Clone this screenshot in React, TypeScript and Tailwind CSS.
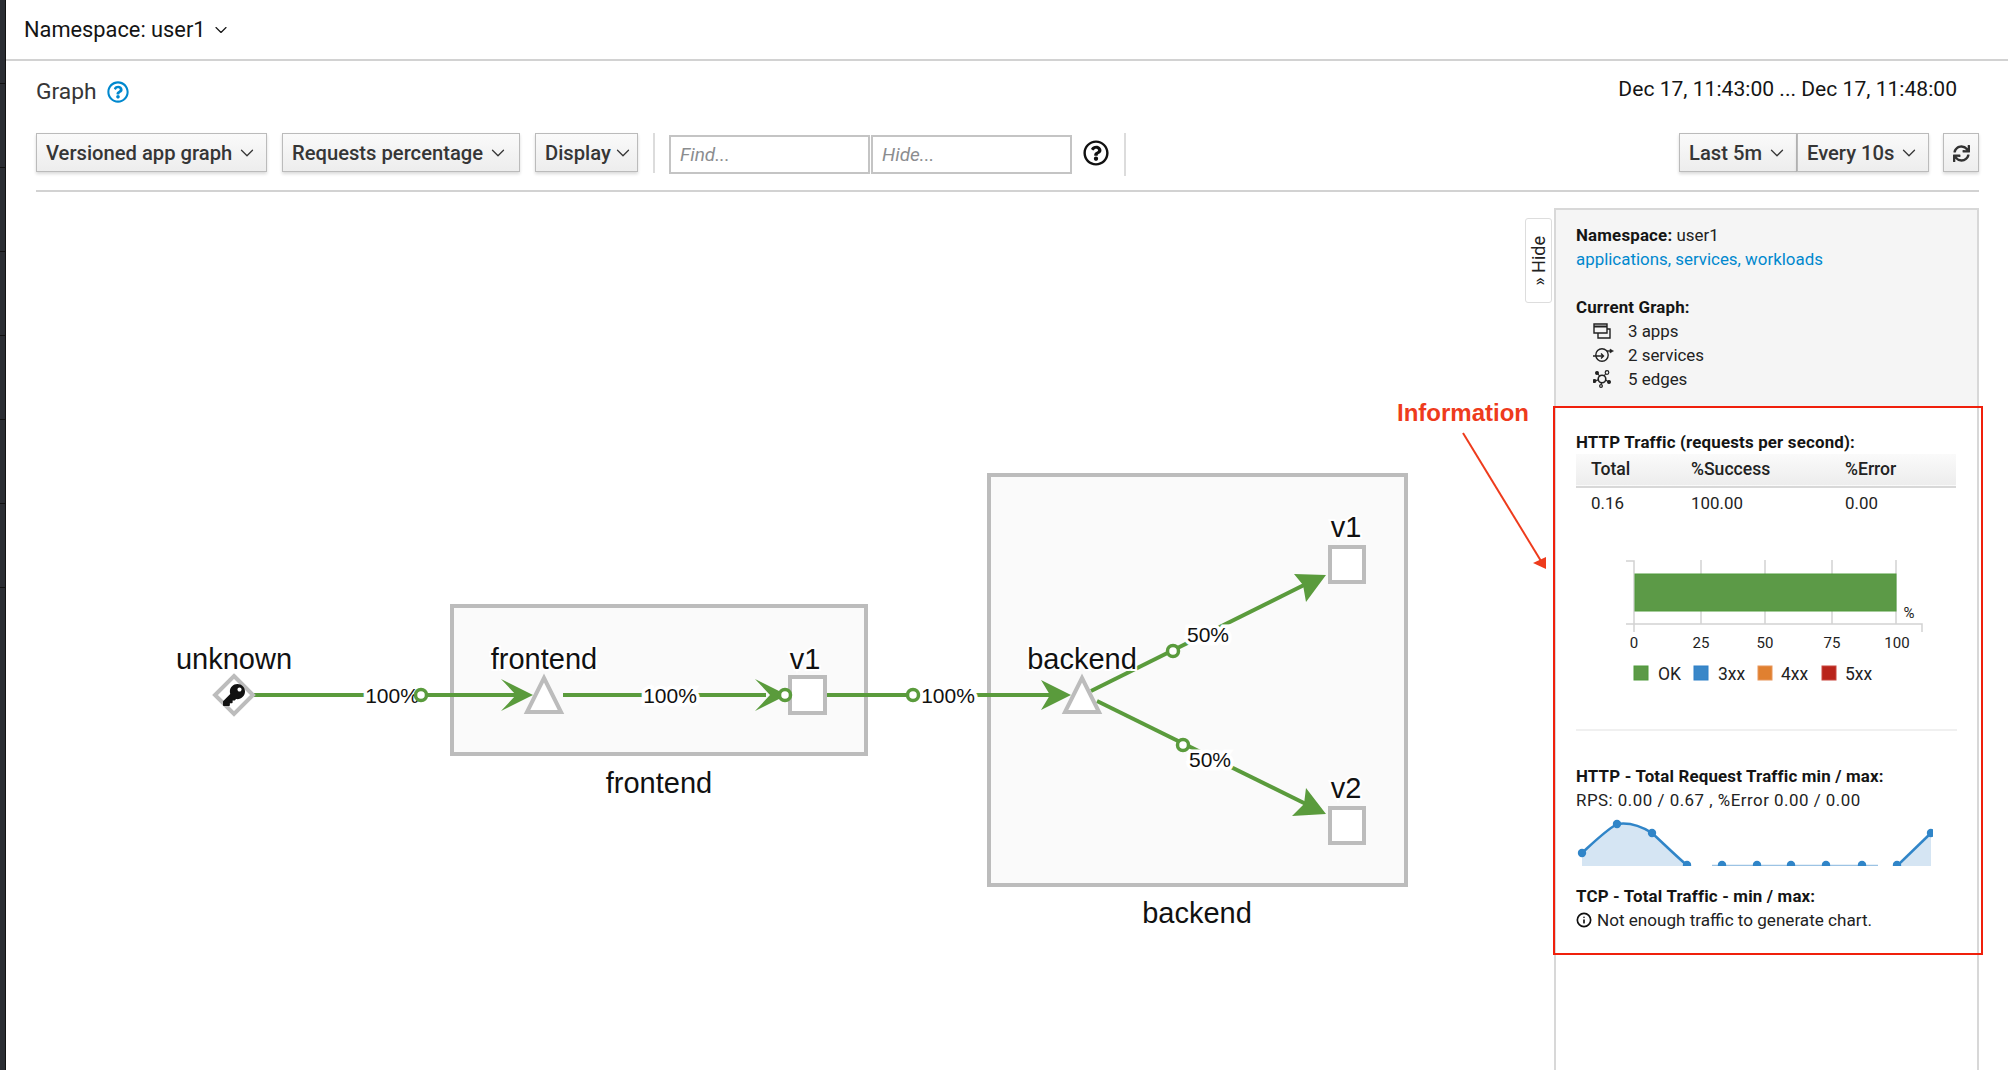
import { ChevronDown, Info } from "lucide-react";
import { FaKey, FaRegQuestionCircle, FaSync } from "react-icons/fa";

const GREEN = "#5a9b3c";
const GREY = "#bcbcbc";

const BUTTON =
  "flex h-[39px] shrink-0 items-center border border-[#bbb] bg-gradient-to-b from-[#fafafa] to-[#ededed] px-[9px] pt-[1px] text-[20.2px] font-medium text-[#363636] shadow-[0_2px_3px_rgba(0,0,0,0.15)]";

function DropButton({
  label,
  width,
  chevron = "ml-[4px]",
}: {
  label: string;
  width: string;
  chevron?: string;
}) {
  return (
    <button type="button" className={`${BUTTON} ${width}`}>
      <span className="whitespace-nowrap">{label}</span>
      <ChevronDown className={`h-[22px] w-[22px] shrink-0 text-[#363636] ${chevron}`} strokeWidth={1.4} />
    </button>
  );
}

function Label({
  x,
  y,
  size = 29,
  halo = 4,
  children,
}: {
  x: number;
  y: number;
  size?: number;
  halo?: number;
  children: string;
}) {
  return (
    <text
      x={x}
      y={y}
      textAnchor="middle"
      fontSize={size}
      fontFamily="'Liberation Sans', sans-serif"
      fill="#111"
      stroke="#fff"
      strokeWidth={halo}
      className="[paint-order:stroke]"
    >
      {children}
    </text>
  );
}

function Ring({ x, y }: { x: number; y: number }) {
  return <circle cx={x} cy={y} r={5.5} fill="#fff" stroke={GREEN} strokeWidth={3.5} />;
}

function GraphCanvas() {
  return (
    <svg viewBox="36 192 1518 878" className="h-[878px] w-[1518px] shrink-0">
      {/* compound boxes */}
      <rect x={452} y={606} width={414} height={148} fill="#fafafa" stroke={GREY} strokeWidth={4} />
      <rect x={989} y={475} width={417} height={410} fill="#fafafa" stroke={GREY} strokeWidth={4} />

      {/* edges */}
      <g stroke={GREEN} strokeWidth={4} fill="none">
        <path d="M253 695H516" />
        <path d="M563 695H766" />
        <path d="M825 695H1050" />
        <path d="M1091 691L1310 582" />
        <path d="M1097 701L1310 806" />
      </g>
      <g fill={GREEN}>
        <path d="M501 679L533 695L501 711L516 695Z" />
        <path d="M755 679L787 695L755 711L770 695Z" />
        <path d="M1041 680L1071 695L1041 710L1050 695Z" />
        <path d="M1326 575L1294 574L1303 585L1306 602Z" />
        <path d="M1326 814L1306 788L1304 804L1292 816Z" />
      </g>

      <Label x={392} y={703} size={21} halo={7}>100%</Label>
      <Label x={670} y={703} size={21} halo={7}>100%</Label>
      <Label x={948} y={703} size={21} halo={7}>100%</Label>
      <Label x={1208} y={642} size={21} halo={7}>50%</Label>
      <Label x={1210} y={767} size={21} halo={7}>50%</Label>

      {/* nodes */}
      <path d="M234 676L253 695L234 714L215 695Z" fill="#fff" stroke={GREY} strokeWidth={4} />
      <FaKey x={223} y={684} size={22} color="#111" />
      <path d="M544 678L561 712H527Z" fill="#fff" stroke={GREY} strokeWidth={4} />
      <rect x={790} y={677} width={35} height={36} fill="#fff" stroke={GREY} strokeWidth={4} />
      <path d="M1082 678L1099 712H1065Z" fill="#fff" stroke={GREY} strokeWidth={4} />
      <rect x={1330} y={547} width={34} height={35} fill="#fff" stroke={GREY} strokeWidth={4} />
      <rect x={1330} y={808} width={34} height={35} fill="#fff" stroke={GREY} strokeWidth={4} />

      <Ring x={421} y={695} />
      <Ring x={785} y={695} />
      <Ring x={913} y={695} />
      <Ring x={1173} y={651} />
      <Ring x={1183} y={745} />

      <Label x={234} y={669}>unknown</Label>
      <Label x={544} y={669}>frontend</Label>
      <Label x={805} y={669}>v1</Label>
      <Label x={659} y={793}>frontend</Label>
      <Label x={1082} y={669}>backend</Label>
      <Label x={1346} y={537}>v1</Label>
      <Label x={1346} y={798}>v2</Label>
      <Label x={1197} y={923}>backend</Label>

      {/* annotation */}
      <text
        x={1397}
        y={421}
        fontSize={24}
        fontWeight={700}
        fontFamily="'Liberation Sans', sans-serif"
        fill="#ee3b1c"
      >
        Information
      </text>
      <path d="M1463 433L1541 561" stroke="#ee3b1c" strokeWidth={2} fill="none" />
      <path d="M1533 563L1546 557L1546 569Z" fill="#ee3b1c" />
    </svg>
  );
}

function AppsIcon() {
  return (
    <svg viewBox="0 0 18 16" className="h-[16px] w-[18px]" fill="none" stroke="#222" strokeWidth={1.4}>
      <path d="M1 1H14V10H1Z" />
      <path d="M1 3.5H14" strokeWidth={2} />
      <path d="M14 6H17V15H5V10" />
    </svg>
  );
}

function ServicesIcon() {
  return (
    <svg viewBox="0 0 21 16" className="h-[16px] w-[21px]" fill="none" stroke="#222" strokeWidth={1.4}>
      <circle cx={9} cy={8} r={6.2} />
      <path d="M0 9H10M8 6.5L10.5 9L8 11.5" />
      <path d="M14 4H17" />
      <path d="M17 2L20.5 4L17 6Z" fill="#222" strokeWidth={0.5} />
    </svg>
  );
}

function EdgesIcon() {
  return (
    <svg viewBox="0 0 18 18" className="h-[18px] w-[18px]" fill="#222" stroke="#222" strokeWidth={1.2}>
      <circle cx={9} cy={9} r={3.8} fill="none" strokeWidth={1.6} />
      <circle cx={4} cy={3} r={1.4} />
      <circle cx={14} cy={2.5} r={1.8} fill="none" />
      <circle cx={1.5} cy={11} r={1.4} />
      <circle cx={16} cy={12} r={1.4} />
      <circle cx={8} cy={16} r={1.4} fill="none" />
      <path d="M5 4L7 6.5M12.5 4L11 6M3 10.5L5.5 9.8M15 11.5L12.5 10M8.5 13L8.2 14.5" fill="none" />
    </svg>
  );
}

function BarChart() {
  const text = "fill-[#222] text-[15px] [font-family:Roboto,sans-serif]";
  return (
    <svg viewBox="1576 550 380 140" className="h-[140px] w-[380px]">
      <g stroke="#d2d2d2" strokeWidth={1.5} fill="none">
        <path d="M1626 561H1634V632" />
        <path d="M1701 560V624M1765 560V624M1832 560V624M1896 560V624" />
        <path d="M1626 624H1922V632" />
      </g>
      <rect x={1635} y={574} width={261} height={37} fill="#5c9a47" stroke="#4f9a3a" strokeWidth={1} />
      <text x={1909} y={618} textAnchor="middle" className={text}>%</text>
      {[
        [1634, "0"],
        [1701, "25"],
        [1765, "50"],
        [1832, "75"],
        [1897, "100"],
      ].map(([x, t]) => (
        <text key={t} x={x} y={648} textAnchor="middle" className={text}>
          {t}
        </text>
      ))}
      {[
        [1634, "#5c9a47", "#4f9a3a", "OK", 1658],
        [1694, "#3a87c8", "#2f80c8", "3xx", 1718],
        [1758, "#e08030", "#e8965a", "4xx", 1781],
        [1822, "#b9241b", "#c9463f", "5xx", 1845],
      ].map(([x, fill, line, t, tx]) => (
        <g key={t as string}>
          <rect x={x as number} y={666} width={14} height={14} fill={fill as string} stroke={line as string} />
          <text x={tx as number} y={680} className={`${text} text-[17.5px]`}>
            {t}
          </text>
        </g>
      ))}
    </svg>
  );
}

function Sparkline() {
  const dots = [
    [1582, 853],
    [1617, 824],
    [1652, 833],
    [1687, 865],
    [1722, 865],
    [1757, 865],
    [1791, 865],
    [1826, 865],
    [1862, 865],
    [1897, 865],
    [1931, 833],
  ];
  return (
    <svg viewBox="1576 816 380 54" className="mt-[4px] h-[54px] w-[380px]">
      <defs>
        <clipPath id="spark">
          <rect x={1576} y={816} width={357} height={50} />
        </clipPath>
      </defs>
      <g clipPath="url(#spark)">
        <path
          d="M1582 853C1594 842 1605 831 1617 824C1630 822 1641 826 1652 833C1665 845 1676 856 1687 866H1582ZM1897 866L1931 833V866Z"
          fill="#d5e5f3"
        />
        <path
          d="M1582 853C1594 842 1605 831 1617 824C1630 822 1641 826 1652 833C1665 845 1676 856 1689 867"
          fill="none"
          stroke="#3085c8"
          strokeWidth={2.5}
        />
        <path d="M1712 865.5H1878" stroke="#9cc3e4" strokeWidth={1.5} />
        <path d="M1897 866L1931 833" stroke="#3085c8" strokeWidth={2.5} />
        {dots.map(([x, y]) => (
          <circle key={x} cx={x} cy={y} r={4.2} fill="#3085c8" />
        ))}
      </g>
    </svg>
  );
}

function SidePanel() {
  return (
    <aside className="relative mt-[16px] h-[862px] w-[425px] shrink-0 border-x-2 border-t-2 border-[#d8d8d8] text-[16.9px] leading-[24px] text-[#222]">
      <button
        type="button"
        className="absolute -left-[31px] top-[8px] flex h-[85px] w-[27px] items-center justify-center rounded-[3px] border border-[#ddd] bg-white text-[18px] text-[#222]"
      >
        <span className="rotate-180 [writing-mode:vertical-rl]">» Hide</span>
      </button>

      <section className="h-[197px] bg-[#f5f5f5] pl-[20px] pt-[13px]">
        <div>
          <strong className="font-bold tracking-[0.17px] text-[#151515]">Namespace:</strong> user1
        </div>
        <div className="text-[#0088ce]">applications, services, workloads</div>
        <div className="mt-[24px] font-bold tracking-[0.17px] text-[#151515]">Current Graph:</div>
        {[
          { icon: <AppsIcon />, label: "3 apps" },
          { icon: <ServicesIcon />, label: "2 services" },
          { icon: <EdgesIcon />, label: "5 edges" },
        ].map((row) => (
          <div key={row.label} className="flex items-center">
            <span className="ml-[17px] flex w-[35px] items-center">{row.icon}</span>
            {row.label}
          </div>
        ))}
      </section>

      <section className="px-[20px] pt-[23px]">
        <div className="font-bold tracking-[0.17px] text-[#151515]">HTTP Traffic (requests per second):</div>
        <table className="w-[380px] table-fixed border-collapse text-left">
          <thead>
            <tr className="h-[33px] border-b-2 border-[#d8d8d8] bg-gradient-to-b from-[#fafafa] to-[#ededed] text-[17.6px]">
              <th className="w-[115px] pb-[2px] pl-[15px] font-medium">Total</th>
              <th className="w-[154px] pb-[2px] font-medium">%Success</th>
              <th className="pb-[2px] font-medium">%Error</th>
            </tr>
          </thead>
          <tbody>
            <tr className="h-[31px]">
              <td className="pl-[15px]">0.16</td>
              <td>100.00</td>
              <td>0.00</td>
            </tr>
          </tbody>
        </table>

        <div className="mt-[32px]">
          <BarChart />
        </div>
        <div className="mt-[39px] h-[2px] w-[381px] bg-[#f0f0f0]" />

        <div className="mt-[33px] font-bold tracking-[0.17px] text-[#151515]">
          HTTP - Total Request Traffic min / max:
        </div>
        <div className="tracking-[0.5px]">RPS: 0.00 / 0.67 , %Error 0.00 / 0.00</div>
        <Sparkline />

        <div className="mt-[14px] font-bold tracking-[0.17px] text-[#151515]">TCP - Total Traffic - min / max:</div>
        <div className="flex items-center gap-[5px] text-[17.1px]">
          <Info className="h-[16px] w-[16px] text-[#111]" strokeWidth={2.5} />
          Not enough traffic to generate chart.
        </div>
      </section>

      {/* annotation frame drawn over the panel */}
      <div className="pointer-events-none absolute -left-[3px] -right-[6px] top-[196px] h-[549px] border-2 border-[#f0200c]" />
    </aside>
  );
}

export default function App() {
  return (
    <div className="flex h-[1070px] w-full overflow-hidden bg-white [font-family:Roboto,sans-serif]">
      <div className="flex w-[6px] shrink-0 flex-col border-r border-[#111] bg-[#2a2d33]">
        {[0, 1, 2, 3, 4, 5, 6].map((i) => (
          <div key={i} className="h-[84px] border-b border-[#111]" />
        ))}
      </div>

      <main className="min-w-0 flex-1">
        <header className="flex h-[61px] items-center gap-[5px] border-b-2 border-[#d2d2d2] pl-[18px] pt-[1px] text-[21.8px] text-[#151515]">
          Namespace: user1
          <ChevronDown className="h-[20px] w-[20px]" strokeWidth={1.4} />
        </header>

        <div className="pl-[30px] pr-[29px]">
          <div className="flex h-[72px] items-start justify-between">
            <div className="mt-[16px] flex h-[30px] items-center gap-[10px] text-[22.8px] text-[#363636]">
              Graph
              <FaRegQuestionCircle size={22} color="#0088ce" />
            </div>
            <div className="mt-[13px] flex h-[30px] items-center pr-[22px] text-[21.1px] text-[#151515]">
              Dec 17, 11:43:00 ... Dec 17, 11:48:00
            </div>
          </div>

          <div className="flex h-[59px] items-start border-b-2 border-[#d2d2d2]">
            <DropButton label="Versioned app graph" width="w-[231px]" />
            <div className="ml-[15px]">
              <DropButton label="Requests percentage" width="w-[238px]" />
            </div>
            <div className="ml-[15px]">
              <DropButton label="Display" width="w-[103px]" chevron="ml-[1px]" />
            </div>
            <div className="ml-[15px] h-[40px] w-[2px] bg-[#dcdcdc]" />
            <div className="ml-[14px] mt-[2px] flex h-[39px]">
              <input
                placeholder="Find..."
                className="w-[201px] border-2 border-[#c4c4c4] px-[9px] pt-[2px] text-[19px] italic placeholder:text-[#8b8d8f]"
              />
              <input
                placeholder="Hide..."
                className="ml-[1px] w-[201px] border-2 border-[#c4c4c4] px-[9px] pt-[2px] text-[19px] italic placeholder:text-[#8b8d8f]"
              />
            </div>
            <div className="ml-[11px] mt-[7px]">
              <FaRegQuestionCircle size={26} color="#111" />
            </div>
            <div className="ml-[15px] h-[43px] w-[2px] bg-[#dcdcdc]" />
            <div className="ml-auto flex">
              <DropButton label="Last 5m" width="w-[118px]" />
              <DropButton label="Every 10s" width="w-[132px]" />
              <button type="button" className={`${BUTTON} ml-[14px] w-[36px] justify-center !px-0`}>
                <FaSync size={17} color="#333" />
              </button>
            </div>
          </div>

          <div className="flex">
            <GraphCanvas />
            <SidePanel />
          </div>
        </div>
      </main>
    </div>
  );
}
